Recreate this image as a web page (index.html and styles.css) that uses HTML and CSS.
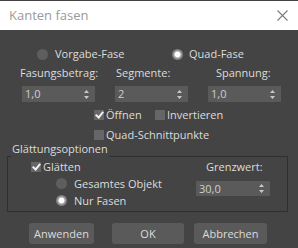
FILE: index.html
```html
<!DOCTYPE html>
<html lang="de">
<head>
  <meta charset="UTF-8" />
  <title>Kanten fasen</title>
  <link rel="stylesheet" href="styles.css">
</head>
<body>
  <div class="dialog">
    <div class="titlebar">
      <span class="title">Kanten fasen</span>
      <svg class="close" width="11" height="11" viewBox="0 0 11 11">
        <path d="M0.5 0.5 L10.5 10.5 M10.5 0.5 L0.5 10.5" stroke="#7a7a7a" stroke-width="1.1" fill="none"/>
      </svg>
    </div>

    <div class="content">
      <!-- Fase mode -->
      <div class="mode-row">
        <label class="opt opt-vorgabe"><span class="radio"></span>Vorgabe-Fase</label>
        <label class="opt opt-quad"><span class="radio on"></span>Quad-Fase</label>
      </div>

      <!-- Parameters -->
      <div class="params">
        <div class="param">
          <span class="param-label lbl-1">Fasungsbetrag:</span>
          <div class="spinner"><span>1,0</span><svg class="arrows" width="5" height="9" viewBox="0 0 5 9"><path d="M2.5 0 L5 3 L0 3 Z M2.5 9 L5 6 L0 6 Z" fill="#c8c8c8"/></svg></div>
        </div>
        <div class="param">
          <span class="param-label lbl-2">Segmente:</span>
          <div class="spinner"><span>2</span><svg class="arrows" width="5" height="9" viewBox="0 0 5 9"><path d="M2.5 0 L5 3 L0 3 Z M2.5 9 L5 6 L0 6 Z" fill="#c8c8c8"/></svg></div>
        </div>
        <div class="param">
          <span class="param-label lbl-3">Spannung:</span>
          <div class="spinner"><span>1,0</span><svg class="arrows" width="5" height="9" viewBox="0 0 5 9"><path d="M2.5 0 L5 3 L0 3 Z M2.5 9 L5 6 L0 6 Z" fill="#c8c8c8"/></svg></div>
        </div>
      </div>

      <div class="check-row">
        <label class="opt opt-open"><span class="check on"></span>Öffnen</label>
        <label class="opt"><span class="check"></span>Invertieren</label>
      </div>
      <div class="check-row quad-row">
        <label class="opt"><span class="check"></span>Quad-Schnittpunkte</label>
      </div>

      <!-- Smoothing group -->
      <div class="group">
        <span class="group-title">Glättungsoptionen</span>
        <div class="group-left">
          <label class="opt grow"><span class="check on"></span>Glätten</label>
          <label class="opt grow sub"><span class="radio"></span>Gesamtes Objekt</label>
          <label class="opt grow sub"><span class="radio on"></span>Nur Fasen</label>
        </div>
        <div class="group-right">
          <span class="param-label lbl-grenz">Grenzwert:</span>
          <div class="spinner"><span>30,0</span><svg class="arrows" width="5" height="9" viewBox="0 0 5 9"><path d="M2.5 0 L5 3 L0 3 Z M2.5 9 L5 6 L0 6 Z" fill="#c8c8c8"/></svg></div>
        </div>
      </div>

      <div class="buttons">
        <button class="btn btn-apply">Anwenden</button>
        <button class="btn btn-ok">OK</button>
        <button class="btn btn-cancel">Abbrechen</button>
      </div>
    </div>
  </div>
</body>
</html>
```

FILE: styles.css
```css
body {
  margin: 0;
  background: #444444;
  font-family: 'Open Sans', sans-serif;
  font-size: 11px;
  color: #dcdcdc;
}

.dialog {
  width: 298px;
  height: 248px;
  overflow: hidden;
  background: #444444;
}

/* Title bar */
.titlebar {
  height: 29px;
  margin-top: 1px;
  background: #ffffff;
  display: flex;
  align-items: center;
  justify-content: space-between;
  padding: 0 9px 0 9px;
}

.title {
  font-size: 13px;
  color: #9a9a9a;
  line-height: 29px;
  margin-top: -1px;
}

.close {
  margin-right: 1px;
}

.content {
  display: flex;
  flex-direction: column;
}

/* Shared option controls */
.opt {
  display: flex;
  align-items: center;
  height: 18px;
  line-height: 18px;
  white-space: nowrap;
}

.radio {
  width: 11px;
  height: 11px;
  border-radius: 50%;
  background: #5e5e5e;
  margin-right: 7px;
  flex: none;
}

.radio.on {
  background: radial-gradient(circle, #ffffff 0, #ffffff 2.5px, #a0a0a0 3.5px, #777777 5.5px);
}

.check {
  width: 10px;
  height: 10px;
  background: #666666;
  margin-right: 2px;
  flex: none;
  position: relative;
}

.check.on::after {
  content: "";
  position: absolute;
  left: 3px;
  top: 0;
  width: 3px;
  height: 6px;
  border: solid #f0f0f0;
  border-width: 0 2px 2px 0;
  transform: rotate(40deg);
}

/* Mode row */
.mode-row {
  display: flex;
  margin-top: 15px;
  padding-left: 37px;
}

.opt-vorgabe {
  width: 135px;
}

.opt-quad .radio {
  margin-right: 6px;
}

/* Parameter columns */
.params {
  display: grid;
  grid-template-columns: 73px 73px 73px;
  column-gap: 20px;
  padding-left: 22px;
  margin-top: 2px;
}

.param {
  display: flex;
  flex-direction: column;
}

.param-label {
  height: 16px;
  line-height: 16px;
  white-space: nowrap;
}

.lbl-1 { margin-left: -2px; }
.lbl-2 { margin-left: 1px; }
.lbl-3 { margin-left: 8px; }

.spinner {
  margin-top: 5px;
  height: 16px;
  background: #5a5a5a;
  display: flex;
  align-items: center;
  justify-content: space-between;
  padding: 0 6px 0 3px;
  color: #cfcfcf;
  line-height: 16px;
}

/* Checkbox rows */
.check-row {
  display: flex;
  padding-left: 94px;
  margin-top: 4px;
}

.opt-open {
  width: 61px;
}

.quad-row {
  margin-top: 2px;
}

/* Glättungsoptionen */
.group {
  position: relative;
  margin: 12px 0 0 7px;
  width: 279px;
  height: 54px;
  border: 1px solid #2f2f2f;
  display: flex;
}

.group-title {
  position: absolute;
  left: 3px;
  top: -15px;
  height: 16px;
  line-height: 14px;
  padding: 0 1px;
  background: #444444;
}

.group-left {
  display: flex;
  flex-direction: column;
  padding-left: 23px;
  margin-top: 1px;
  width: 165px;
}

.group-left .grow {
  height: 17px;
  line-height: 17px;
}

.group-left .sub {
  padding-left: 25px;
}

.group-right {
  display: flex;
  flex-direction: column;
  margin-top: 2px;
  width: 74px;
}

.lbl-grenz {
  margin-left: 10px;
}

.group-right .spinner {
  margin-top: 6px;
  height: 15px;
}

/* Buttons */
.buttons {
  display: flex;
  margin-top: 11px;
  padding-left: 29px;
}

.btn {
  height: 21px;
  background: #5a5a5a;
  border: none;
  border-radius: 3px;
  color: #dcdcdc;
  font-family: 'Open Sans', sans-serif;
  font-size: 11px;
  padding: 0;
}

.btn-apply { width: 65px; }
.btn-ok { width: 72px; margin-left: 18px; }
.btn-cancel { width: 73px; margin-left: 10px; }
```
